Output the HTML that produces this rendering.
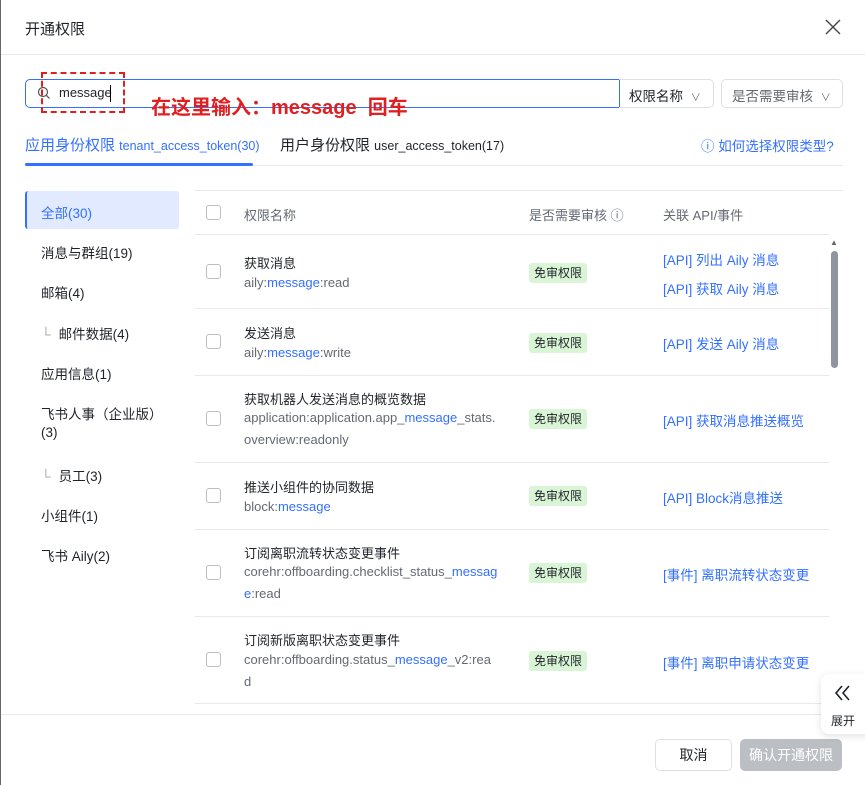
<!DOCTYPE html><html><head><meta charset="utf-8"><style>
*{box-sizing:border-box;margin:0;padding:0}
body{width:865px;height:785px;background:#fff;font-family:"Liberation Sans","Noto Sans CJK SC",sans-serif;color:#1f2329;font-size:13px;position:relative;overflow:hidden;border-left:1px solid #666}
.a{position:absolute;white-space:nowrap}
.cb{position:absolute;left:205px;width:15px;height:15px;border:1px solid #bbbfc4;border-radius:3px;background:#fff}
.n{left:243px;font-size:13px;color:#1f2329}
.s{left:243px;font-size:13px;color:#646a73}
.b{color:#3370ff}
.tag{position:absolute;left:528px;height:20px;line-height:20px;padding:0 5px;background:#d9f5d6;color:#1f2329;font-size:12px;border-radius:3px}
.api{left:662px;color:#3370ff;font-size:13.5px}
.hl{position:absolute;left:194px;width:634px;height:1px;background:#e8e9eb}
.side{left:40px;font-size:13.5px;color:#1f2329}
</style></head><body>
<div class="a" style="left:24px;top:18px;font-size:15px">开通权限</div>
<svg class="a" style="left:824px;top:19px" width="16" height="16" viewBox="0 0 16 16"><path d="M1 1L15 15M15 1L1 15" stroke="#444" stroke-width="1.4"/></svg>
<div class="a" style="left:0;top:54px;width:865px;height:1px;background:#e8e9eb"></div>

<div class="a" style="left:24px;top:79px;width:595px;height:29px;border:1px solid #3370ff;border-radius:5px 0 0 5px"></div>
<svg class="a" style="left:36px;top:86px" width="14" height="14" viewBox="0 0 14 14"><circle cx="6" cy="6" r="4.5" fill="none" stroke="#555" stroke-width="1.2"/><path d="M9.3 9.3L12.5 12.5" stroke="#555" stroke-width="1.2"/></svg>
<div class="a" style="left:58px;top:85px;font-size:13px">message</div>
<div class="a" style="left:109px;top:85px;width:1px;height:17px;background:#000"></div>
<div class="a" style="left:618px;top:79px;width:95px;height:29px;border:1px solid #dee0e3;border-left:none;border-radius:0 5px 5px 0"></div>
<div class="a" style="left:628px;top:85px;font-size:13.5px">权限名称 <span style="font-size:10px;color:#666;margin-left:4px">∨</span></div>
<div class="a" style="left:720px;top:79px;width:122px;height:29px;border:1px solid #dee0e3;border-radius:5px"></div>
<div class="a" style="left:731px;top:85px;font-size:13.5px;color:#646a73">是否需要审核 <span style="font-size:10px;color:#666;margin-left:4px">∨</span></div>
<div class="a" style="left:40px;top:72px;width:84px;height:41px;border:2px dashed #e02020"></div>
<div class="a" style="left:150px;top:91px;font-size:20px;font-weight:bold;color:#e02020">在这里输入：message&nbsp; 回车</div>

<div class="a" style="left:24px;top:134px;font-size:15px;color:#3370ff">应用身份权限 <span style="font-size:12.5px">tenant_access_token(30)</span></div>
<div class="a" style="left:279px;top:134px;font-size:15px">用户身份权限 <span style="font-size:12.5px">user_access_token(17)</span></div>
<div class="a" style="left:700px;top:135px;font-size:13.5px;color:#3370ff">ⓘ 如何选择权限类型?</div>
<div class="a" style="left:24px;top:165px;width:818px;height:1px;background:#e8e9eb"></div>
<div class="a" style="left:24px;top:163px;width:228px;height:3px;background:#3370ff;border-radius:2px"></div>

<div class="a" style="left:24px;top:191px;width:154px;height:38px;background:#e1eaff;border-left:2px solid #3370ff;border-radius:3px"></div>
<div class="a side" style="top:202px;color:#3370ff">全部(30)</div>
<div class="a side" style="top:242px">消息与群组(19)</div>
<div class="a side" style="top:282px">邮箱(4)</div>
<div class="a side" style="top:323px"><span style="color:#aaa;margin-right:8px">└</span>邮件数据(4)</div>
<div class="a side" style="top:363px">应用信息(1)</div>
<div class="a side" style="top:403px">飞书人事（企业版）</div>
<div class="a side" style="top:425px">(3)</div>
<div class="a side" style="top:465px"><span style="color:#aaa;margin-right:8px">└</span>员工(3)</div>
<div class="a side" style="top:505px">小组件(1)</div>
<div class="a side" style="top:545px">飞书 Aily(2)</div>

<div class="hl" style="top:190px;width:648px"></div>
<div class="cb" style="top:205px"></div>
<div class="a" style="left:243px;top:205px;color:#646a73">权限名称</div>
<div class="a" style="left:528px;top:205px;color:#646a73">是否需要审核 ⓘ</div>
<div class="a" style="left:662px;top:205px;color:#646a73">关联 API/事件</div>
<div class="hl" style="top:234px"></div>

<div class="cb" style="top:264px"></div>
<div class="a n" style="top:253px">获取消息</div>
<div class="a s" style="top:275px">aily:<span class="b">message</span>:read</div>
<div class="tag" style="top:263px">免审权限</div>
<div class="a api" style="top:249px">[API] 列出 Aily 消息</div>
<div class="a api" style="top:278px">[API] 获取 Aily 消息</div>
<div class="hl" style="top:308px"></div>

<div class="cb" style="top:334px"></div>
<div class="a n" style="top:323px">发送消息</div>
<div class="a s" style="top:345px">aily:<span class="b">message</span>:write</div>
<div class="tag" style="top:333px">免审权限</div>
<div class="a api" style="top:333px">[API] 发送 Aily 消息</div>
<div class="hl" style="top:375px"></div>

<div class="cb" style="top:411px"></div>
<div class="a n" style="top:389px">获取机器人发送消息的概览数据</div>
<div class="a s" style="top:410px">application:application.app_<span class="b">message</span>_stats.</div>
<div class="a s" style="top:432px">overview:readonly</div>
<div class="tag" style="top:409px">免审权限</div>
<div class="a api" style="top:410px">[API] 获取消息推送概览</div>
<div class="hl" style="top:462px"></div>

<div class="cb" style="top:488px"></div>
<div class="a n" style="top:477px">推送小组件的协同数据</div>
<div class="a s" style="top:499px">block:<span class="b">message</span></div>
<div class="tag" style="top:486px">免审权限</div>
<div class="a api" style="top:487px">[API] Block消息推送</div>
<div class="hl" style="top:529px"></div>

<div class="cb" style="top:565px"></div>
<div class="a n" style="top:543px">订阅离职流转状态变更事件</div>
<div class="a s" style="top:564px">corehr:offboarding.checklist_status_<span class="b">messag</span></div>
<div class="a s" style="top:586px"><span class="b">e</span>:read</div>
<div class="tag" style="top:563px">免审权限</div>
<div class="a api" style="top:564px">[事件] 离职流转状态变更</div>
<div class="hl" style="top:616px"></div>

<div class="cb" style="top:652px"></div>
<div class="a n" style="top:630px">订阅新版离职状态变更事件</div>
<div class="a s" style="top:652px">corehr:offboarding.status_<span class="b">message</span>_v2:rea</div>
<div class="a s" style="top:674px">d</div>
<div class="tag" style="top:651px">免审权限</div>
<div class="a api" style="top:652px">[事件] 离职申请状态变更</div>
<div class="hl" style="top:703px"></div>

<div class="a" style="left:829px;top:238px;font-size:8px;color:#666">▲</div>
<div class="a" style="left:830px;top:251px;width:7px;height:117px;background:#8f959e;border-radius:4px"></div>

<div class="a" style="left:0;top:714px;width:865px;height:1px;background:#e8e9eb"></div>
<div class="a" style="left:654px;top:739px;width:77px;height:32px;border:1px solid #dee0e3;border-radius:5px;text-align:center;line-height:30px;font-size:14px">取消</div>
<div class="a" style="left:739px;top:739px;width:102px;height:32px;background:#bbbfc4;border-radius:5px;text-align:center;line-height:32px;font-size:14px;color:#fff">确认开通权限</div>

<div class="a" style="left:820px;top:674px;width:50px;height:60px;background:#fff;border-radius:8px 0 0 8px;box-shadow:0 2px 8px rgba(0,0,0,.12)"></div>
<svg class="a" style="left:833px;top:685px" width="18" height="16" viewBox="0 0 18 16"><path d="M8 1L2 8L8 15M15 1L9 8L15 15" fill="none" stroke="#1f2329" stroke-width="1.6"/></svg>
<div class="a" style="left:830px;top:712px;font-size:12px">展开</div>
</body></html>
